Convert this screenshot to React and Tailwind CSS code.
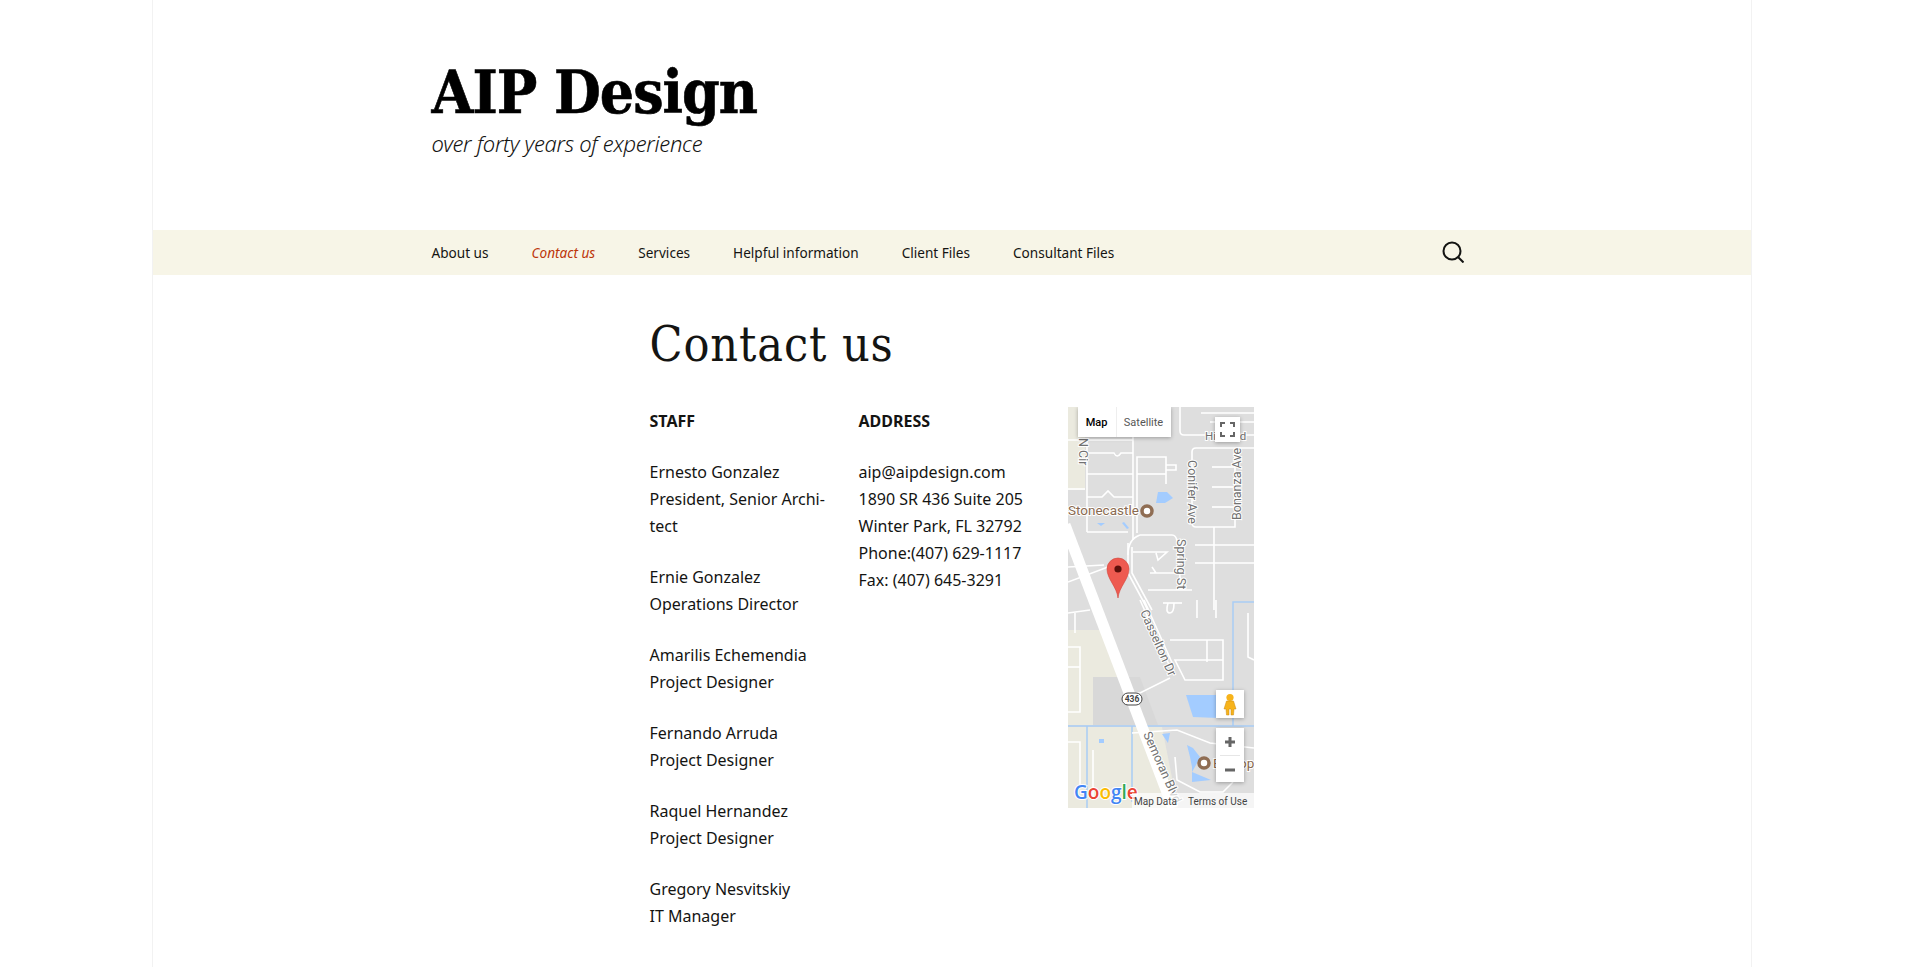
import React from 'react';

const navItems = [
  { label: 'About us' },
  { label: 'Contact us', active: true },
  { label: 'Services' },
  { label: 'Helpful information' },
  { label: 'Client Files' },
  { label: 'Consultant Files' },
];

const staff = [
  ['Ernesto Gonzalez', 'President, Senior Archi-', 'tect'],
  ['Ernie Gonzalez', 'Operations Director'],
  ['Amarilis Echemendia', 'Project Designer'],
  ['Fernando Arruda', 'Project Designer'],
  ['Raquel Hernandez', 'Project Designer'],
  ['Gregory Nesvitskiy', 'IT Manager'],
];

const address = [
  'aip@aipdesign.com',
  '1890 SR 436 Suite 205',
  'Winter Park, FL 32792',
  'Phone:(407) 629-1117',
  'Fax: (407) 645-3291',
];

// white road lines, in map coordinates
const roads = [
  'M65 0V133', 'M0 33H65', 'M19 33V125', 'M19 46H46q3 6 7 0H65', 'M19 67H65', 'M19 90H34l6-6 6 6H65', 'M19 125H60',
  'M69 126V50H98V77', 'M69 67H98', 'M98 58h10v5H98',
  'M186 41H128q-4 0-4 4V116q0 4 4 4H167V41', 'M144 60H167', 'M144 80H167', 'M144 100H167',
  'M112 0V24q0 4 4 4H186', 'M133 6H186', 'M142 15H186',
  'M146 120V203', 'M127 138H186', 'M127 156H186', 'M72 128H104q4 0 5 6L113 183', 'M72 128q-12 4-12 20',
  'M60 136V166L80 203', 'M64 140V166L84 203', 'M72 193L102 260', 'M76 193L106 260',
  'M65 145H99L90 153L88 146', 'M82 166H108L88 166L84 160', 'M80 183H124', 'M129 193V211', 'M148 193V211', 'M95 196H114', 'M100 196q-3 10 2 10 4 0 4-10',
  'M102 233H155V273H117L107 253H155', 'M139 233V255', 'M102 271L72 286H60',
  'M0 206L22 203', 'M7 206V226', 'M0 240H12V305H0', 'M0 260H12', 'M0 335H12V378', 'M25 343V393',
  'M64 326L109 323L142 336L186 341', 'M107 350L109 373L132 385H155L165 375', 'M180 206V250L186 253',
  'M0 175L40 160', 'M0 160L36 158', 'M0 82H17', 'M80 203L75 193',
];

const mapLabels = [
  { text: 'N Cir', at: 'translate(11 31) rotate(90)', size: 12.5 },
  { text: 'Conifer Ave', at: 'translate(120 53) rotate(90)', size: 12.5 },
  { text: 'Bonanza Ave', at: 'translate(173 113) rotate(-90)', size: 12.5 },
  { text: 'Spring St', at: 'translate(109 132) rotate(90)', size: 12.5 },
  { text: 'Casselton Dr', at: 'translate(72 205) rotate(66)', size: 12.5 },
  { text: 'Semoran Blvd', at: 'translate(75 327) rotate(66)', size: 12.5 },
  { text: 'Hiatt Rd', at: 'translate(137 33)', size: 11.5 },
];

const MapPicture = () => (
  <svg width="186" height="401" viewBox="0 0 186 401" className="block">
    <rect width="186" height="401" fill="#dedede" />
    <path d="M0 0H17V83H0Z" fill="#ebeadf" />
    <path d="M0 223H35L64 318H0Z" fill="#ebeadf" />
    <path d="M0 320H94L110 401H0Z" fill="#ebeadf" />
    <path d="M25 270H72L90 318H25Z" fill="#d8d8d8" />
    <path d="M118 288H150V311L125 310Z" fill="#a3ccff" />
    <path d="M90 85H99L105 91L97 96L88 96Z" fill="#a3ccff" />
    <path d="M29 116H37L33 119Z" fill="#a3ccff" />
    <path d="M54 116L56 115L61 121L59 122Z" fill="#a3ccff" />
    <path d="M119 338L125 341L132 350L128 358L124 365L143 373L124 375L124 360L122 350Z" fill="#a3ccff" />
    <path d="M94 327L102 326L100 336Z" fill="#a3ccff" />
    <path d="M31 332H36V336H31Z" fill="#a3ccff" />
    <path d="M0 319H186M19 319V401M64 319V395M165 319V195H186" stroke="#a9cdf5" strokeWidth="1.5" fill="none" />
    <path d="M-3 118L105 401" stroke="#ffffff" strokeWidth="11" fill="none" />
    {roads.map((d) => (
      <path key={d} d={d} stroke="#ffffff" strokeWidth="1.6" fill="none" />
    ))}
    {mapLabels.map((l) => (
      <text
        key={l.text}
        transform={l.at}
        fontFamily="Roboto, sans-serif"
        fontSize={l.size}
        fill="#717171"
        stroke="#ffffff"
        strokeWidth="2"
        paintOrder="stroke"
      >
        {l.text}
      </text>
    ))}
    <text x="0" y="108" fontFamily="Roboto, sans-serif" fontSize="13.5" fill="#8a6a50" stroke="#ffffff" strokeWidth="2" paintOrder="stroke">
      Stonecastle
    </text>
    <circle cx="79" cy="104" r="5" fill="#ffffff" stroke="#8f6d53" strokeWidth="3.5" />
    <text x="145" y="361" fontFamily="Roboto, sans-serif" fontSize="13.5" fill="#8a6a50" stroke="#ffffff" strokeWidth="2" paintOrder="stroke">
      Bishop
    </text>
    <circle cx="136" cy="356" r="5" fill="#ffffff" stroke="#8f6d53" strokeWidth="3.5" />
    <rect x="54" y="286" width="20" height="12" rx="6" fill="#ffffff" stroke="#444444" strokeWidth="1" />
    <text x="64" y="295" textAnchor="middle" fontFamily="Roboto, sans-serif" fontSize="8.5" fontWeight="700" fill="#444444">
      436
    </text>
    <path d="M50 191C49 180 39 172 39 162A11 11 0 0 1 61 162C61 172 51 180 50 191Z" fill="#ee5a50" stroke="#d2453b" strokeWidth="0.6" />
    <circle cx="50" cy="162" r="3.6" fill="#5e100b" />
    <text x="6" y="392" fontFamily="'Open Sans', sans-serif" fontSize="19" fontWeight="600" stroke="#ffffff" strokeWidth="2" paintOrder="stroke">
      <tspan fill="#4285f4">G</tspan>
      <tspan fill="#ea4335">o</tspan>
      <tspan fill="#fbbc05">o</tspan>
      <tspan fill="#4285f4">g</tspan>
      <tspan fill="#34a853">l</tspan>
      <tspan fill="#ea4335">e</tspan>
    </text>
    <rect x="64" y="386" width="122" height="15" fill="#ffffff" fillOpacity="0.7" />
    <text x="66" y="398" fontFamily="Roboto, sans-serif" fontSize="10" fill="#444444">Map Data</text>
    <text x="120" y="398" fontFamily="Roboto, sans-serif" fontSize="10" fill="#444444">Terms of Use</text>
  </svg>
);

const MapEmbed = () => (
  <div className="relative w-[186px] h-[401px] overflow-hidden">
    <MapPicture />
    <div className="absolute left-[10px] top-0 flex h-[30px] bg-white shadow-[0_1px_4px_rgba(0,0,0,0.3)] font-['Roboto',sans-serif] text-[11px] leading-[31px]">
      <div className="w-[38px] text-center font-medium text-black">Map</div>
      <div className="w-[55px] border-l border-[#eeeeee] text-center text-[#565656]">Satellite</div>
    </div>
    <div className="absolute left-[147px] top-[10px] w-[25px] h-[25px] bg-white shadow-[0_1px_4px_rgba(0,0,0,0.3)]">
      <svg width="25" height="25" viewBox="0 0 25 25">
        <path d="M6 10V6H10M15 6H19V10M19 15V19H15M10 19H6V15" stroke="#666666" strokeWidth="2" fill="none" />
      </svg>
    </div>
    <div className="absolute left-[148px] top-[283px] w-[28px] h-[28px] bg-white shadow-[0_1px_4px_rgba(0,0,0,0.3)]">
      <svg width="28" height="28" viewBox="0 0 28 28">
        <circle cx="14" cy="7.5" r="3.6" fill="#f7b31b" />
        <path d="M10.5 11H17.5L20 19H18L17.5 25H15V19H13V25H10.5L10 19H8Z" fill="#f7b31b" stroke="#c98a12" strokeWidth="0.5" />
      </svg>
    </div>
    <div className="absolute left-[148px] top-[321px] w-[28px] h-[54px] bg-white shadow-[0_1px_4px_rgba(0,0,0,0.3)]">
      <svg width="28" height="54" viewBox="0 0 28 54">
        <path d="M14 9V19M9 14H19M9 42H19" stroke="#666666" strokeWidth="3" fill="none" />
        <path d="M4 27.5H24" stroke="#e6e6e6" strokeWidth="1" />
      </svg>
    </div>
  </div>
);

const App = () => {
  return (
    <div className="bg-white h-[967px] overflow-hidden pr-[17px] font-['Noto_Sans',sans-serif] text-[#141412]">
      <div className="mx-auto w-[1600px] h-[967px] border-x border-[#f2f2f2]">
        <header className="h-[230px] pt-[56px]">
          <div className="mx-auto w-[1040px]">
            <h1 className="font-['DejaVu_Serif_Condensed','DejaVu_Serif',serif] font-bold text-[60px] leading-[72px] tracking-[-1px] text-black [-webkit-text-stroke:0.6px_black]">
              AIP Design
            </h1>
            <p className="font-light italic text-[22px] leading-[30px] tracking-[-0.3px]">over forty years of experience</p>
          </div>
        </header>
        <nav className="h-[45px] bg-[#f7f5e7]">
          <div className="mx-auto flex h-full w-[1040px] items-center justify-between pr-[8px]">
            <ul className="flex gap-[43px] pt-[2px] text-[13.6px]">
              {navItems.map((item) => (
                <li key={item.label} className={item.active ? 'italic text-[#bc360a]' : ''}>
                  {item.label}
                </li>
              ))}
            </ul>
            <svg width="22" height="22" viewBox="0 0 22 22" className="-mt-px">
              <circle cx="10" cy="10" r="8.5" stroke="#141412" strokeWidth="2" fill="none" />
              <path d="M16 16L21.5 21.5" stroke="#141412" strokeWidth="2" fill="none" />
            </svg>
          </div>
        </nav>
        <main className="mx-auto w-[604px]">
          <h1 className="pt-[40px] font-['DejaVu_Serif_Condensed','DejaVu_Serif',serif] font-normal text-[48px] leading-[58px] tracking-[0.9px]">
            Contact us
          </h1>
          <div className="mt-[34px] grid grid-cols-[186px_186px_186px] gap-x-[23px] text-[16px] leading-[27px]">
            <div className="pt-px">
              <p className="font-bold">STAFF</p>
              {staff.map((person) => (
                <p key={person[0]} className="mt-[24px]">
                  {person.map((line) => (
                    <span key={line} className="block">{line}</span>
                  ))}
                </p>
              ))}
            </div>
            <div className="pt-px">
              <p className="font-bold">ADDRESS</p>
              <p className="mt-[24px]">
                {address.map((line) => (
                  <span key={line} className="block">{line}</span>
                ))}
              </p>
            </div>
            <MapEmbed />
          </div>
        </main>
      </div>
    </div>
  );
};

export default App;
